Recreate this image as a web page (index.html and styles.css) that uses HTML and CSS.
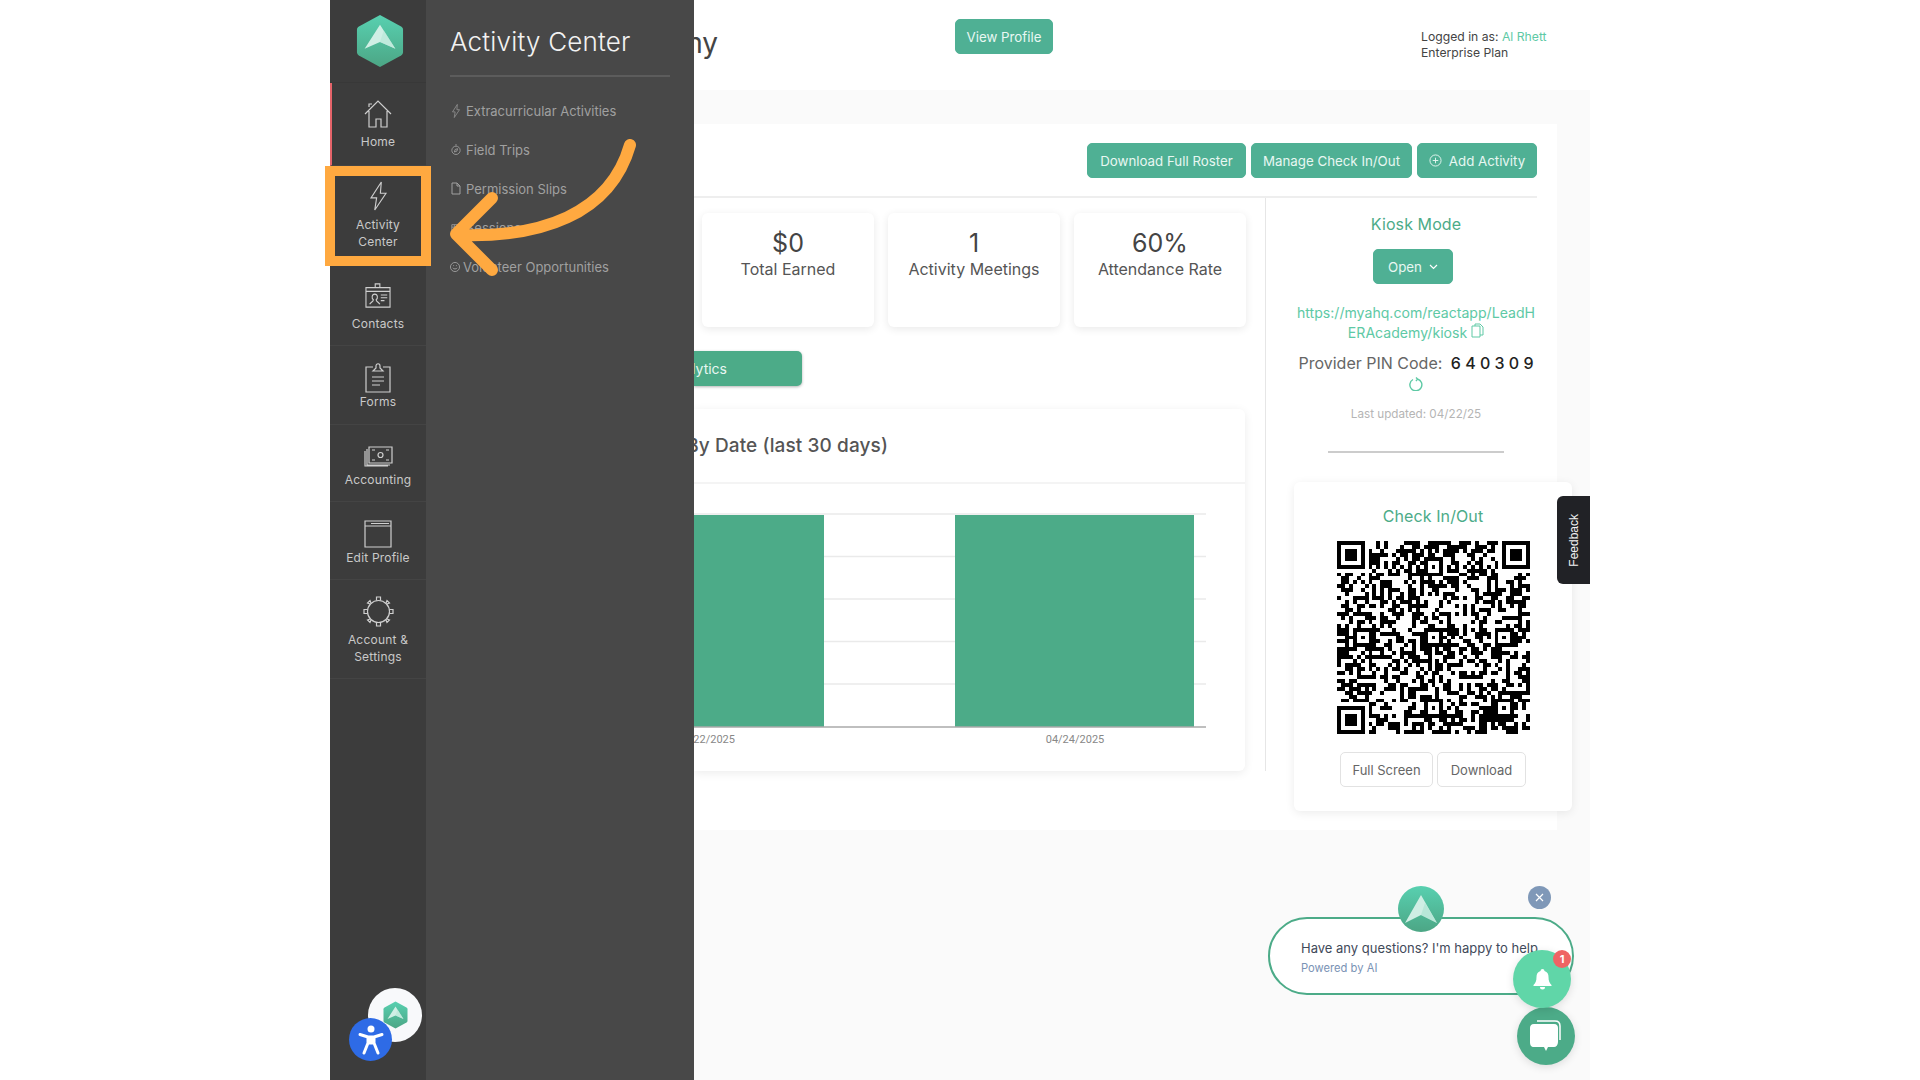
FILE: index.html
```html
<!DOCTYPE html>
<html>
<head>
    <meta charset="UTF-8">
    <title>Activity Center</title>
    <link rel="stylesheet" href="styles.css">
</head>
<body>
<div class="Frame">
    <!-- left rail -->
    <nav class="Rail">
        <div class="RailLogo">
            <svg width="48" height="54" viewBox="0 0 50 56"><use href="#hexLogo"/></svg>
        </div>
        <a class="RailItem Active RHome">
            <svg width="28" height="28" viewBox="0 0 28 28" class="Ico"><path d="M1 14 14 1l13 13M5 11v16h7v-8h5v8h6V11M5 7V4h3"/></svg>
            <span>Home</span>
        </a>
        <a class="RailItem RActivity">
            <svg width="19" height="30" viewBox="0 0 20 32" class="Ico"><path d="M13 1 2 18h6l-2 13 12-18h-6l1-12z"/></svg>
            <span>Activity<br>Center</span>
        </a>
        <a class="RailItem RContacts">
            <svg width="28" height="25" viewBox="0 0 28 27" class="Ico"><path d="M1 5h26v21H1zM1 9h26M11 5V1h5v4M5 23c1-2 4-3 4-5-2-1-2-6 1.500-6s3.500 5 1.500 6c0 2 3 3 4 5M17 13h7M17 16h7M17 19h4"/></svg>
            <span>Contacts</span>
        </a>
        <a class="RailItem RForms">
            <svg width="26" height="30" viewBox="0 0 26 30" class="Ico"><path d="M8 4H1v25h24V4h-7M8 8l3-3V3c0-3 4-3 4 0v2l3 3zM7 14h12M7 18h12M7 22h8"/></svg>
            <span>Forms</span>
        </a>
        <a class="RailItem RMoney">
            <svg width="30" height="21" viewBox="0 0 30 21" class="Ico"><path d="M6 1h23v16H6zM4 3v16h23M2 5v15h23"/><circle cx="17.500" cy="9" r="2.500"/><path d="M9 4h3M23 4h3M9 14h3M23 14h3"/></svg>
            <span>Accounting</span>
        </a>
        <a class="RailItem REdit">
            <svg width="28" height="28" viewBox="0 0 28 28" class="Ico"><path d="M1 1h26v26H1zM1 6h26M7 3.500h18"/></svg>
            <span>Edit Profile</span>
        </a>
        <a class="RailItem RAccount">
            <svg width="31" height="31" viewBox="0 0 31 31" class="Ico"><circle cx="15.500" cy="15.500" r="11"/><path d="M13.500 4.500V1h4v3.500M13.500 26.500V30h4v-3.500M4.500 13.500H1v4h3.500M26.500 13.500H30v4h-3.500M7 8 4.500 7 7 4.500 8 7M24 8l2.500-1L24 4.500 23 7M7 23l-2.500 1L7 26.500 8 24M24 23l2.500 1-2.500 2.500L23 24"/></svg>
            <span>Account &amp;<br>Settings</span>
        </a>
    </nav>

    <!-- flyout menu -->
    <aside class="Fly">
        <h2>Activity Center</h2>
        <ul>
            <li>
                <svg width="10" height="14" viewBox="0 0 20 32" class="Ico Thick"><path d="M13 1 2 18h6l-2 13 12-18h-6l1-12z"/></svg>
                Extracurricular Activities
            </li>
            <li>
                <svg width="10" height="13" viewBox="0 0 12 14" class="Ico Thin"><circle cx="6" cy="8" r="5"/><path d="M5 1.500h2M4 10l1-3 3-1-1 3z"/></svg>
                Field Trips
            </li>
            <li>
                <svg width="10" height="13" viewBox="0 0 10 13" class="Ico Thin"><path d="M1 1h5l3 3v8H1zM6 1v3h3"/></svg>
                Permission Slips
            </li>
            <li>
                <svg width="10" height="10" viewBox="0 0 12 12" class="Ico Thin"><path d="M1 2h10v9H1zM1 5h10M4 2v9"/></svg>
                Sessions
            </li>
            <li class="Tight">
                <svg width="10" height="10" viewBox="0 0 11 11" class="Ico Thin"><circle cx="5.500" cy="5.500" r="5"/><path d="M3 6.500c1 1.500 4 1.500 5 0M3.500 4h1M6.500 4h1"/></svg>
                Volunteer Opportunities
            </li>
        </ul>
    </aside>

    <main class="Main">
        <header class="Top">
            <h1 class="PageTitle"><span>Academy</span></h1>
            <button class="Btn ViewBtn">View Profile</button>
            <div class="Login">
                Logged in as: <a>Al Rhett</a><br>
                Enterprise Plan
            </div>
        </header>
        <div class="Sheet">
            <div class="Actions">
                <button class="Btn W159">Download Full Roster</button>
                <button class="Btn W161">Manage Check In/Out</button>
                <button class="Btn W120">
                    <svg width="13" height="13" viewBox="0 0 14 14" class="Ico Thin"><circle cx="7" cy="7" r="6"/><path d="M7 4v6M4 7h6"/></svg>
                    Add Activity
                </button>
            </div>
            <div class="Body">
                <section class="Left">
                    <div class="Stats">
                        <div class="Stat"><b>$0</b><span>Total Earned</span></div>
                        <div class="Stat"><b>1</b><span>Activity Meetings</span></div>
                        <div class="Stat"><b>60%</b><span>Attendance Rate</span></div>
                    </div>
                    <div class="Analytics"><span>Analytics</span></div>
                    <div class="ChartCard">
                        <h3 class="ChartTitle"><span>Attendance By Date (last 30 days)</span></h3>
                        <svg class="Chart" width="551" height="286" viewBox="0 0 551 286">
                            <g stroke="#eaeaea" stroke-width="1.500">
                                <path d="M0 30H512M0 72.500H512M0 115H512M0 157.500H512M0 200H512"/>
                            </g>
                            <rect x="0" y="31" width="130" height="212" fill="#4cab88"/>
                            <rect x="261" y="31" width="239" height="212" fill="#4cab88"/>
                            <path d="M0 243H512" stroke="#aaa" stroke-width="1.500"/>
                            <text x="41" y="259" text-anchor="end" class="Tick">04/22/2025</text>
                            <text x="381" y="259" text-anchor="middle" class="Tick">04/24/2025</text>
                        </svg>
                    </div>
                </section>
                <section class="Right">
                    <div class="Kiosk">
                        <h4>Kiosk Mode</h4>
                        <button class="Btn OpenBtn">Open
                            <svg width="9" height="6" viewBox="0 0 9 6" class="Ico Wht"><path d="M1 1l3.500 3.500L8 1"/></svg>
                        </button>
                        <a class="KioskLink">https://myahq.com/reactapp/LeadH<br>ERAcademy/kiosk
                            <svg width="13" height="15" viewBox="0 0 13 15" class="Ico Grn"><path d="M1 3h8v11H1zM4 3V1h5l3 3v8H9"/></svg>
                        </a>
                        <div class="Pin">Provider PIN Code: <b>6 4 0 3 0 9</b></div>
                        <svg width="14" height="14" viewBox="0 0 14 14" class="Ico GrnB Refresh"><path d="M8.500 2A6 6 0 1 1 4 2.500M8.500 2 7 .5M8.500 2 7 4"/></svg>
                        <div class="Updated">Last updated: 04/22/25</div>
                        <hr>
                    </div>
                    <div class="CheckCard">
                        <h4>Check In/Out</h4>
                        <svg id="Qr" class="Qr" width="193" height="193" viewBox="0 0 49 49" shape-rendering="crispEdges"></svg>
                        <div class="CheckBtns">
                            <button class="Ghost W93">Full Screen</button>
                            <button class="Ghost W89">Download</button>
                        </div>
                    </div>
                </section>
            </div>
        </div>
    </main>

    <!-- things floating over the page -->
    <div class="Feedback"><span>Feedback</span></div>

    <div class="Pill">
        <p>Have any questions? I'm happy to help</p>
        <small>Powered by AI</small>
    </div>
    <div class="PillFace">
        <svg width="36" height="28" viewBox="0 0 36 28"><path d="M18 0 34 28 18 20 2 28z" fill="#cfeee4"/><path d="M18 20 34 28 22 8z" fill="#a9e3d0" opacity=".6"/></svg>
    </div>
    <div class="PillClose">
        <svg width="9" height="9" viewBox="0 0 9 9" class="Ico Wht"><path d="M1 1l7 7M8 1 1 8"/></svg>
    </div>
    <div class="ChatBtn">
        <svg width="36" height="36" viewBox="0 0 36 36"><path d="M9 3h18c3 0 5 2 5 5v14" fill="none" stroke="#fff" stroke-width="1.500"/><path d="M6 6h20c3 0 4 2 4 4v14c0 3-2 5-4 5h-6l-2 4-2-4H6c-3 0-4-2-4-5V10c0-2 1-4 4-4z" fill="#fff"/></svg>
    </div>
    <div class="BellBtn">
        <svg width="19" height="21" viewBox="0 0 19 21"><path d="M9.500 0a2 2 0 0 1 2 2c3 1 4 3 4 6 0 4 1 6 3 8v1H.5v-1c2-2 3-4 3-8 0-3 1-5 4-6a2 2 0 0 1 2-2zM7 18h5a2.500 2.500 0 0 1-5 0z" fill="#fff"/></svg>
    </div>
    <div class="BellBadge">1</div>

    <div class="MiniLogo">
        <svg width="25" height="28" viewBox="0 0 50 56"><use href="#hexLogo"/></svg>
    </div>
    <div class="A11y">
        <svg width="26" height="30" viewBox="0 0 26 30"><circle cx="13" cy="4" r="3.500" fill="#fff"/><path d="M2 9.500 10 12v6l-4 10M24 9.500 16 12v6l4 10M10 18h6M10 12h6" fill="none" stroke="#fff" stroke-width="3" stroke-linecap="round" stroke-linejoin="round"/><path d="M10 12h6v7h-6z" fill="#fff"/></svg>
    </div>

    <div class="Highlight"></div>
    <svg class="Arrow" width="210" height="150" viewBox="0 0 210 150">
        <path d="M180 6C160 76 90 99 8 96M42 59 6 95l36 36" fill="none" stroke="#ffa940" stroke-width="12" stroke-linecap="round" stroke-linejoin="round"/>
    </svg>
</div>

<svg width="0" height="0" class="Defs">
    <defs>
        <linearGradient id="hexGrad" x1="0" y1="0" x2="0" y2="1">
            <stop offset="0" stop-color="#58d0b0"/>
            <stop offset="1" stop-color="#4ca685"/>
        </linearGradient>
        <g id="hexLogo">
            <path d="M25 1 47 13c1.500 1 2 2 2 3.500v23c0 1.500-.5 2.500-2 3.500L25 55 3 43c-1.500-1-2-2-2-3.500v-23C1 15 1.500 14 3 13z" fill="url(#hexGrad)"/>
            <path d="M25 11 41 36 25 29 9 36z" fill="#d0efe5"/>
            <path d="M25 29 41 36 29 17z" fill="#b5e6d6" opacity=".6"/>
        </g>
    </defs>
</svg>
<script src="qr.js"></script>
</body>
</html>
```
FILE: styles.css
```css
*{box-sizing: border-box;}
html,body{margin: 0;padding: 0;height: 100%;background: #fff;overflow: hidden;}
body{font-family: "Inter","Noto Sans",sans-serif;color: #555;}
button{font-family: inherit;cursor: pointer;}
h1,h2,h3,h4,p,ul{margin: 0;padding: 0;font-weight: 400;}
.Defs{position: absolute;}
.Frame{position: relative;width: 1260px;height: 1080px;margin-left: 330px;background: #fafafa;display: flex;}

.Ico{fill: none;stroke: #cfcfcf;stroke-width: 1.2;flex: none;}
.Ico.Thick{stroke: #8d8d8d;stroke-width: 2;}
.Ico.Thin{stroke: currentColor;stroke-width: 1;}
.Ico.Wht{stroke: #fff;}
.Ico.Grn{stroke: #5ec9a5;stroke-width: 1;}
.Ico.GrnB{stroke: #5ec9a5;stroke-width: 1.400;}

/* rail */
.Rail{width: 96px;flex: none;background: #3c3c3c;height: 1080px;z-index: 3;}
.RailLogo{height: 83px;display: flex;align-items: center;justify-content: center;padding-left: 4px;padding-bottom: 1px;border-bottom: 1px solid #383838;}
.RailItem{display: flex;flex-direction: column;align-items: center;border-bottom: 1px solid #444;color: #c9c9c9;font-size: 12px;letter-spacing: .2px;line-height: 17px;text-align: center;}
.RailItem svg{display: block;}
.RailItem.Active{border-left: 2px solid #e5646a;padding-right: 2px;}
.RHome{height: 83px;padding-top: 17px;gap: 5px;}
.RActivity{height: 100px;padding-top: 15px;gap: 5px;}
.RContacts{height: 80px;padding-top: 17px;gap: 7px;}
.RForms{height: 79px;padding-top: 17px;gap: 0;}
.RMoney{height: 77px;padding-top: 21px;gap: 4px;}
.REdit{height: 78px;padding-top: 18px;gap: 1px;}
.RAccount{height: 99px;padding-top: 16px;gap: 4px;}

/* flyout */
.Fly{width: 268px;flex: none;background: #484848;height: 1080px;padding: 0 24px;z-index: 3;}
.Fly h2{height: 77px;padding-top: 24px;border-bottom: 2px solid #5c5c5c;color: #f2f2f2;font-size: 26px;line-height: 36px;font-weight: 300;letter-spacing: .2px;white-space: nowrap;}
.Fly ul{list-style: none;padding-top: 14px;}
.Fly li{height: 39px;display: flex;align-items: center;gap: 5px;color: #a0a0a0;font-size: 13px;padding-left: 1px;}
.Fly li.Tight{padding-left: 0;gap: 3px;}

/* main */
.Main{flex: 1;min-width: 0;}
.Top{height: 90px;background: #fff;display: flex;align-items: flex-start;}
.PageTitle{width: 24px;height: 90px;display: flex;justify-content: flex-end;overflow: hidden;font-size: 28px;line-height: 86px;color: #444;white-space: nowrap;flex: none;}
.PageTitle span{flex: none;}
.Btn{height: 35px;border: 1px solid #4fb094;border-radius: 5px;background: #4fb094;color: #e8f7f2;font-size: 13.300px;display: inline-flex;align-items: center;justify-content: center;gap: 7px;padding: 0;white-space: nowrap;}
.ViewBtn{width: 98px;margin: 19px 0 0 237px;}
.Login{margin: 29px 0 0 368px;font-size: 12.200px;line-height: 16px;color: #444;white-space: nowrap;}
.Login a{color: #5ec9a5;}

.Sheet{width: 863px;height: 706px;margin-top: 34px;background: #fff;}
.Actions{height: 74px;display: flex;justify-content: flex-end;gap: 5px;padding: 19px 0 0;margin-right: 20px;border-bottom: 2px solid #eee;}
.W159{width: 159px;}
.W161{width: 161px;}
.W120{width: 120px;}
.Body{display: flex;}

.Left{width: 572px;height: 573px;border-right: 1px solid #e6e6e6;flex: none;}
.Stats{display: flex;justify-content: flex-end;gap: 14px;padding: 15px 19px 0 0;height: 129px;}
.Stat{width: 172px;height: 114px;background: #fff;border-radius: 6px;box-shadow: 0 2px 8px rgba(0,0,0,.09);display: flex;flex-direction: column;align-items: center;padding-top: 15px;}
.Stat b{font-size: 25px;line-height: 30px;font-weight: 400;color: #444;}
.Stat span{font-size: 16px;line-height: 22px;color: #555;}
.Analytics{width: 108px;height: 35px;margin-top: 24px;background: #4cab88;border-radius: 0 5px 5px 0;box-shadow: 0 1px 3px rgba(0,0,0,.3);display: flex;justify-content: flex-end;align-items: center;overflow: hidden;padding-right: 75px;color: #e8f7f2;font-size: 14px;}
.Analytics span{flex: none;}
.ChartCard{position: relative;width: 551px;height: 362px;margin-top: 23px;background: #fff;border-radius: 0 6px 6px 0;box-shadow: 0 2px 10px rgba(0,0,0,.08);}
.ChartCard::after{content: "";position: absolute;left: 0;right: 0;top: 73px;height: 2px;background: #f4f4f4;}
.ChartTitle{width: 194px;height: 76px;display: flex;justify-content: flex-end;overflow: hidden;font-size: 19px;letter-spacing: .1px;line-height: 74px;font-weight: 500;color: #555;white-space: nowrap;}
.ChartTitle span{flex: none;}
.Chart{display: block;margin-top: -1px;}
.Tick{font-family: "Roboto",sans-serif;font-size: 11px;fill: #888;}

.Right{width: 291px;flex: none;}
.Kiosk{width: 240px;margin-left: 30px;display: flex;flex-direction: column;align-items: center;text-align: center;}
.Kiosk h4{font-size: 16px;letter-spacing: .1px;line-height: 22px;color: #4cab88;margin-top: 15px;}
.OpenBtn{width: 80px;margin: 14px 6px 0 0;}
.KioskLink{margin-top: 19px;font-size: 14.100px;line-height: 20px;color: #5ec9a5;white-space: nowrap;}
.Pin{margin-top: 10px;font-size: 16px;line-height: 20px;color: #666;white-space: nowrap;}
.Pin b{color: #222;font-weight: 500;margin-left: 4px;}
.Refresh{margin-top: 4px;}
.Updated{margin-top: 15px;font-size: 11.700px;line-height: 16px;color: #b5b5b5;}
.Kiosk hr{width: 176px;height: 2px;margin: 29px 0 0;border: 0;background: #ccc;}
.CheckCard{width: 278px;height: 329px;margin: 29px 0 0 28px;background: #fff;border-radius: 6px;box-shadow: 0 2px 10px rgba(0,0,0,.08);display: flex;flex-direction: column;align-items: center;position: relative;}
.CheckCard h4{font-size: 16px;letter-spacing: .1px;line-height: 22px;color: #4cab88;margin-top: 23px;}
.Qr{display: block;margin-top: 14px;}
.CheckBtns{display: flex;gap: 4px;margin-top: 18px;}
.Ghost{height: 35px;background: #fff;border: 1px solid #e2e2e2;border-radius: 5px;color: #666;font-size: 13px;padding: 0;}
.W93{width: 93px;}
.W89{width: 89px;}

/* floating */
.Feedback{position: absolute;left: 1227px;top: 496px;width: 33px;height: 88px;background: #212226;border-radius: 6px 0 0 6px;display: flex;align-items: center;justify-content: center;z-index: 4;}
.Feedback span{writing-mode: vertical-rl;transform: rotate(180deg);color: #f2f2f2;font-family: "Liberation Sans",sans-serif;font-size: 12px;}
.Pill{position: absolute;left: 938px;top: 917px;width: 306px;height: 78px;background: #fff;border: 2px solid #4cab88;border-radius: 39px;padding: 20px 0 0 31px;z-index: 4;}
.Pill p{font-size: 13px;line-height: 18px;color: #3f4a5a;white-space: nowrap;}
.Pill small{display: block;font-size: 11.200px;line-height: 16px;margin-top: 3px;color: #7a93b5;}
.PillFace{position: absolute;left: 1068px;top: 886px;width: 46px;height: 46px;border-radius: 50%;background: linear-gradient(#58d0b0,#4ca685);display: flex;align-items: center;justify-content: center;z-index: 5;}
.PillClose{position: absolute;left: 1198px;top: 886px;width: 23px;height: 23px;border-radius: 50%;background: #7f98b8;display: flex;align-items: center;justify-content: center;z-index: 5;}
.ChatBtn{position: absolute;left: 1187px;top: 1007px;width: 58px;height: 58px;border-radius: 50%;background: #4cab88;box-shadow: 0 2px 8px rgba(0,0,0,.12);display: flex;align-items: center;justify-content: center;z-index: 5;}
.BellBtn{position: absolute;left: 1183px;top: 950px;width: 58px;height: 58px;border-radius: 50%;background: #60d6a8;box-shadow: 0 2px 8px rgba(0,0,0,.12);display: flex;align-items: center;justify-content: center;z-index: 6;}
.BellBadge{position: absolute;left: 1223px;top: 950px;width: 18px;height: 18px;border-radius: 50%;background: #ef6464;color: #fff;font-size: 11px;font-weight: 700;line-height: 18px;text-align: center;z-index: 7;}
.MiniLogo{position: absolute;left: 38px;top: 988px;width: 54px;height: 54px;border-radius: 50%;background: #f8f9fb;display: flex;align-items: center;justify-content: center;z-index: 5;}
.A11y{position: absolute;left: 19px;top: 1018px;width: 43px;height: 43px;border-radius: 50%;background: #2e6be6;display: flex;align-items: center;justify-content: center;z-index: 6;}
.Highlight{position: absolute;left: -5px;top: 166px;width: 106px;height: 100px;border: 10px solid #ffa940;z-index: 8;}
.Arrow{position: absolute;left: 120px;top: 139px;z-index: 8;}
```
FILE: qr.js
```js
// draws the check-in code into #Qr
window.addEventListener("DOMContentLoaded",Init);
function Init(){
    const Size = 49;
    let Cells = [];
    let Seed = 20250422;
    function Rnd(){
        Seed = (Seed * 1103515245 + 12345) & 0x7fffffff;
        return (Seed >> 16) & 1;
    }
    for(let y = 0;y < Size;y++){
        Cells.push([]);
        for(let x = 0;x < Size;x++){
            Cells[y].push(Rnd());
        }
    }
    function Square(px,py,n,v){
        for(let y = py;y < py + n;y++){
            for(let x = px;x < px + n;x++){
                if(x >= 0 && y >= 0 && x < Size && y < Size){
                    Cells[y][x] = v;
                }
            }
        }
    }
    function Finder(px,py){
        Square(px - 1,py - 1,9,0);
        Square(px,py,7,1);
        Square(px + 1,py + 1,5,0);
        Square(px + 2,py + 2,3,1);
    }
    function Align(cx,cy){
        Square(cx - 2,cy - 2,5,1);
        Square(cx - 1,cy - 1,3,0);
        Cells[cy][cx] = 1;
    }
    for(let i = 8;i < Size - 8;i++){
        Cells[6][i] = i % 2 == 0 ? 1:0;
        Cells[i][6] = i % 2 == 0 ? 1:0;
    }
    Finder(0,0);
    Finder(Size - 7,0);
    Finder(0,Size - 7);
    [[24,6],[6,24],[24,24],[42,24],[24,42],[42,42]].forEach(p=>Align(p[0],p[1]));
    let Path = "";
    for(let y = 0;y < Size;y++){
        for(let x = 0;x < Size;x++){
            if(Cells[y][x]){
                Path += "M" + x + " " + y + "h1v1h-1z";
            }
        }
    }
    const El = document.createElementNS("http://www.w3.org/2000/svg","path");
    El.setAttribute("d",Path);
    El.setAttribute("fill","#000");
    document.querySelector("#Qr").appendChild(El);
}
```
